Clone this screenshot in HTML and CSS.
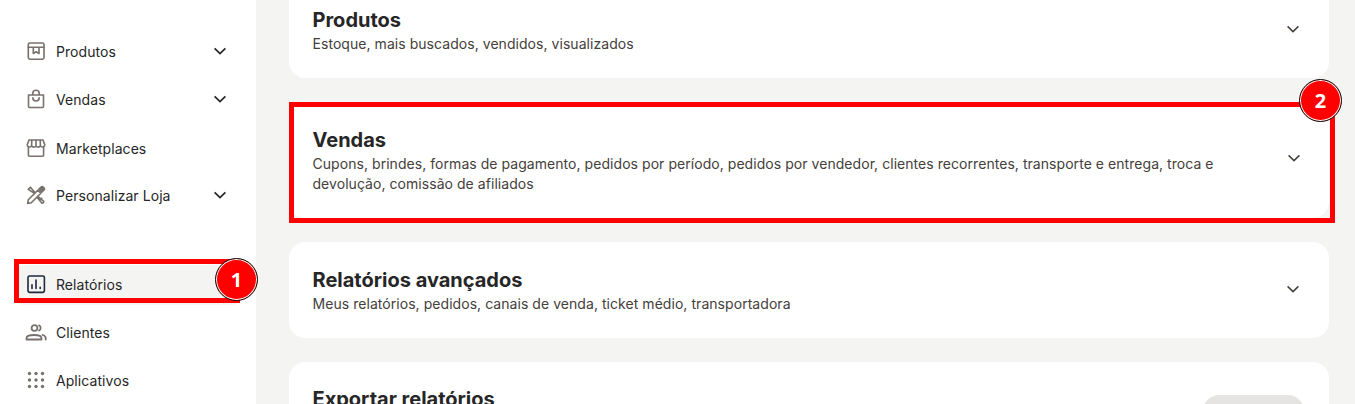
FILE: index.html
```html
<!DOCTYPE html>
<html lang="pt-BR">
<head>
<meta charset="utf-8">
<title>Relatórios</title>
<link rel="stylesheet" href="styles.css">
</head>
<body>
<div class="app">
  <nav class="sidebar">
    <ul class="nav-group">
      <li class="nav-item"><svg class="nav-icon" viewBox="0 0 20 20"><rect x="2.300" y="2" width="15.700" height="16.200" rx="1.600"/><path d="M2.300 6.300h15.700M7.300 6.300v6.200l2.850-1.700 2.850 1.700V6.300"/></svg><span class="nav-label">Produtos</span><svg class="nav-chevron" viewBox="0 0 20 20"><path d="M4.600 7.400 10 12.600l5.400-5.200"/></svg></li>
      <li class="nav-item"><svg class="nav-icon" viewBox="0 0 20 20"><path d="M2.500 6h15v11.500a1 1 0 0 1-1 1h-13a1 1 0 0 1-1-1zM6.800 6V4.400a3.200 3.200 0 0 1 6.400 0V6M6.800 8.800a3.200 3.200 0 0 0 6.400 0"/></svg><span class="nav-label">Vendas</span><svg class="nav-chevron" viewBox="0 0 20 20"><path d="M4.600 7.400 10 12.600l5.400-5.200"/></svg></li>
      <li class="nav-item nav-item-shift"><svg class="nav-icon" viewBox="0 0 20 20"><path d="M2.400 9v8.300a1 1 0 0 0 1 1h13.200a1 1 0 0 0 1-1V9M1.200 6.800 3 2h14l1.800 4.800c0 2.600-3.500 2.800-4.400.8-.8 2-4 2-4.400 0-.4 2-3.600 2-4.400 0-.9 2-4.400 1.800-4.400-.8zM5.800 2l-.2 5.600M10 2v5.600M14.200 2l.2 5.600"/></svg><span class="nav-label">Marketplaces</span></li>
      <li class="nav-item"><svg class="nav-icon" viewBox="0 0 20 20"><path d="M8 8 2.200 4.400 4.400 2.200 8.600 7M11.800 12l2.800 2.400 1.200-1.200M12 11.600l5.800 4.800-.4 1.400-1.400.4-4.400-5.200"/><path d="M2.300 14.800 11.800 5.200l3 3-9.500 9.600-3.600.6z"/><path class="nav-icon-solid" d="M12.800 4.200 15 2a1.500 1.500 0 0 1 2.200 0l.8.800a1.500 1.500 0 0 1 0 2.200l-2.200 2.200z"/></svg><span class="nav-label">Personalizar Loja</span><svg class="nav-chevron" viewBox="0 0 20 20"><path d="M4.600 7.400 10 12.600l5.400-5.200"/></svg></li>
    </ul>
    <ul class="nav-group nav-group-lower">
      <li class="nav-item is-active"><svg class="nav-icon" viewBox="0 0 20 20"><rect x="2" y="2" width="16.400" height="16.400" rx="1.600"/><path d="M6 14.400v-3.600M10 14.400V6M14.200 14.400v-1.200"/></svg><span class="nav-label">Relatórios</span></li>
      <li class="nav-item"><svg class="nav-icon nav-icon-wide nav-icon-heavy" viewBox="0 0 22 20"><circle cx="9.500" cy="6" r="2.900"/><path d="M1.500 17.500v-1.200c0-1.900 3-3.300 7.500-3.300s7.500 1.400 7.500 3.300v1.200zM14 3.400c2.200.7 2.200 4.500 0 5.200M17.500 13c2 .5 3.200 1.500 3.200 2.900v1.600"/></svg><span class="nav-label">Clientes</span></li>
      <li class="nav-item"><svg class="nav-icon nav-dots" viewBox="0 0 20 20"><circle cx="3.500" cy="3.500" r="1.700"/><circle cx="10" cy="3.500" r="1.700"/><circle cx="16.500" cy="3.500" r="1.700"/><circle cx="3.500" cy="10" r="1.700"/><circle cx="10" cy="10" r="1.700"/><circle cx="16.500" cy="10" r="1.700"/><circle cx="3.500" cy="16.500" r="1.700"/><circle cx="10" cy="16.500" r="1.700"/><circle cx="16.500" cy="16.500" r="1.700"/></svg><span class="nav-label">Aplicativos</span></li>
    </ul>
    <div class="mark mark-nav"></div>
    <div class="badge badge-nav">1</div>
  </nav>
  <main class="content">
    <section class="card">
      <div class="card-text"><h2 class="card-title">Produtos</h2><p class="card-sub">Estoque, mais buscados, vendidos, visualizados</p></div>
      <svg class="card-chevron" viewBox="0 0 20 20"><path d="M4.600 7.400 10 12.600l5.400-5.200"/></svg>
    </section>
    <section class="card card-marked">
      <div class="card-text"><h2 class="card-title">Vendas</h2><p class="card-sub">Cupons, brindes, formas de pagamento, pedidos por período, pedidos por vendedor, clientes recorrentes, transporte e entrega, troca e devolução, comissão de afiliados</p></div>
      <svg class="card-chevron card-chevron-marked" viewBox="0 0 20 20"><path d="M4.600 7.400 10 12.600l5.400-5.200"/></svg>
      <div class="mark mark-card"></div>
      <div class="badge badge-card">2</div>
    </section>
    <section class="card">
      <div class="card-text"><h2 class="card-title">Relatórios avançados</h2><p class="card-sub">Meus relatórios, pedidos, canais de venda, ticket médio, transportadora</p></div>
      <svg class="card-chevron" viewBox="0 0 20 20"><path d="M4.600 7.400 10 12.600l5.400-5.200"/></svg>
    </section>
    <section class="card card-export">
      <div class="card-text"><h2 class="card-title">Exportar relatórios</h2></div>
      <div class="skeleton-button"></div>
    </section>
  </main>
</div>
</body>
</html>
```

FILE: styles.css
```css
* { box-sizing: border-box; }
html, body { margin: 0; height: 404px; overflow: hidden; }
body { background: #f4f4f3; font-family: Inter, "Liberation Sans", sans-serif; color: #262626; }
.app { display: flex; height: 404px; overflow: hidden; }

.sidebar { position: relative; flex: 0 0 256px; background: #fff; padding: 32px 16px 0; }
.nav-group { list-style: none; margin: 0; padding: 0; display: flex; flex-direction: column; gap: 8px; }
.nav-group-lower { margin-top: 49px; }
.nav-item { display: flex; align-items: center; gap: 10px; height: 40px; padding: 0 10px; border-radius: 8px; font-size: 14px; line-height: 20px; letter-spacing: .07px; color: #262626; }
.nav-item-shift { position: relative; top: 1px; }
.nav-item.is-active { background: #f4f4f3; }
.nav-label { flex: 1; }
.nav-icon { flex: 0 0 20px; width: 20px; height: 20px; margin-top: -2px; fill: none; stroke: #78716c; stroke-width: 1.600; stroke-linejoin: round; stroke-linecap: round; }
.nav-icon-heavy { stroke-width: 1.800; }
.nav-icon-solid { fill: #78716c; }
.nav-icon-wide { flex-basis: 22px; width: 22px; margin: -2px -1px 0 -1px; }
.is-active .nav-icon { stroke: #1e293b; }
.nav-dots { fill: #78716c; stroke: none; }
.nav-chevron { flex: 0 0 20px; width: 20px; height: 20px; fill: none; stroke: #262626; stroke-width: 1.700; position: relative; top: -1px; }

.content { flex: 1; display: flex; flex-direction: column; gap: 24px; padding: 0 26px 0 33px; margin-top: -18px; }
.card { position: relative; flex: none; display: flex; align-items: center; gap: 24px; padding: 24px 24px 24px 23.500px; background: #fff; border-radius: 16px; }
.card-text { flex: 1; min-width: 0; }
.card-title { margin: 0; font-size: 20px; line-height: 28px; font-weight: 700; color: #262626; }
.card-sub { margin: 0; font-size: 14px; line-height: 20px; letter-spacing: .05px; color: #44403c; }
.card-chevron { flex: 0 0 20px; width: 20px; height: 20px; margin-top: -2px; margin-right: 2px; fill: none; stroke: #44403c; stroke-width: 1.500; }
.card-chevron-marked { margin-top: -4px; margin-right: 1px; }
.card-export { align-items: flex-start; height: 100px; }
.card-export .card-title { margin-top: -1px; }
.skeleton-button { flex: 0 0 101px; height: 44px; margin: 9px 1px 0 0; border-radius: 16px; background: #e5e4e2; }

.mark { position: absolute; border: 5px solid #f00; pointer-events: none; }
.mark-nav { left: 14px; top: 259px; width: 226px; height: 44px; }
.mark-card { left: 0; top: 0; width: 1046px; height: 121px; }
.badge { position: absolute; width: 43px; height: 43px; border-radius: 50%; display: flex; align-items: center; justify-content: center; background: #f00; border: 1px solid #111; box-shadow: inset 0 0 0 1px #fff; color: #fff; font-family: "Open Sans", sans-serif; font-size: 20px; font-weight: 700; }
.badge-nav { left: 215px; top: 258px; }
.badge-card { right: -13px; top: -23px; }
```
